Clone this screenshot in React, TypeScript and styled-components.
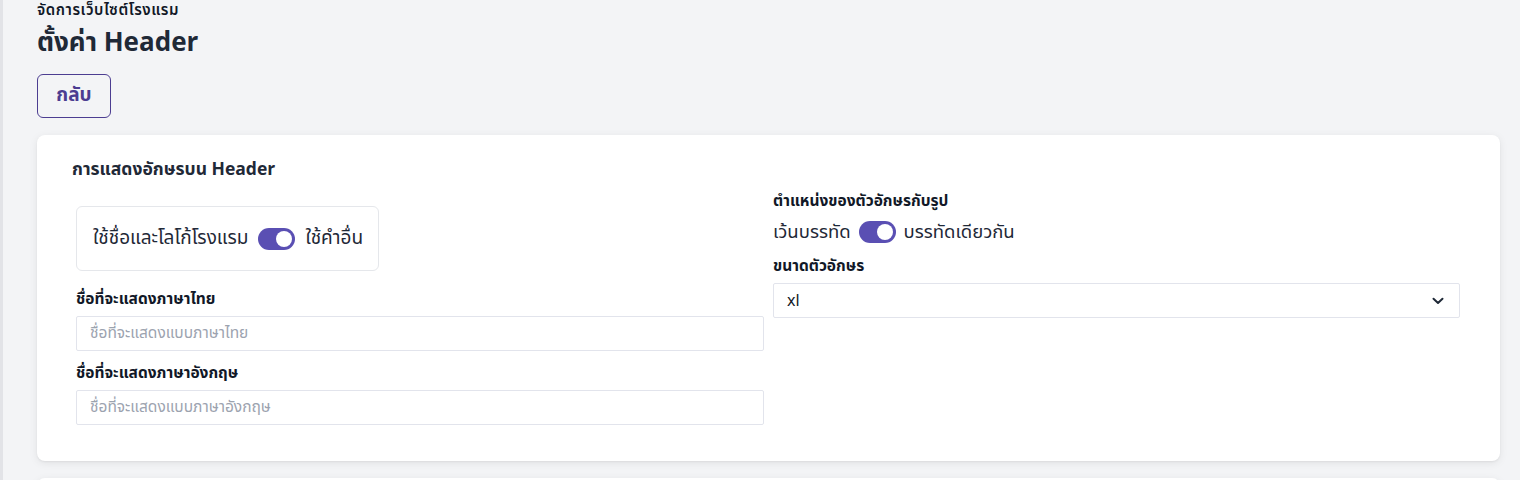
import React from "react";
import styled, { createGlobalStyle } from "styled-components";

const Global = createGlobalStyle`
  html, body { margin: 0; padding: 0; background: #f3f4f6; }
  body { font-family: "Noto Sans Thai", "Noto Sans", "Noto Sans CJK SC", sans-serif; color: #1f2937; }
  * { box-sizing: border-box; }
`;

const Page = styled.div`
  min-height: 480px;
  border-left: 3px solid #e2e3e7;
  padding: 2px 20px 0 34px;
`;

const Breadcrumb = styled.div`
  font-size: 15px;
  font-weight: 600;
  letter-spacing: 0.55px;
  line-height: 18px;
  color: #111827;
`;

const Title = styled.h1`
  margin: 6px 0 0;
  font-size: 26px;
  font-weight: 700;
  line-height: 34px;
  color: #1f2937;
`;

const BackButton = styled.button`
  margin-top: 14px;
  width: 74px;
  height: 44px;
  border: 1px solid #4c3d91;
  border-radius: 6px;
  background: transparent;
  color: #4c3d91;
  font-family: inherit;
  font-size: 19px;
  font-weight: 700;
  line-height: 24px;
  padding: 0;
  cursor: pointer;
`;

const Card = styled.section`
  margin-top: 17px;
  width: 1463px;
  height: 326px;
  background: #fff;
  border-radius: 8px;
  box-shadow: 0 2px 8px rgba(0, 0, 0, 0.08), 0 1px 2px rgba(0, 0, 0, 0.05);
  padding: 22px 40px 0 35px;
`;

const NextCard = styled.div`
  margin-top: 17px;
  width: 1463px;
  height: 20px;
  background: #fff;
  border-radius: 8px 8px 0 0;
  box-shadow: 0 2px 8px rgba(0, 0, 0, 0.08);
`;

const CardTitle = styled.h2`
  margin: 0;
  font-size: 17.5px;
  font-weight: 700;
  line-height: 25px;
  color: #1f2937;
`;

const Grid = styled.div`
  display: grid;
  grid-template-columns: 688px 687px;
  column-gap: 9px;
  padding-left: 4px;
`;

const Column = styled.div<{ $top: number }>`
  display: flex;
  flex-direction: column;
  align-items: stretch;
  padding-top: ${(p) => p.$top}px;
`;

const ToggleBox = styled.div`
  display: flex;
  align-items: center;
  gap: 10px;
  width: 303px;
  height: 65px;
  border: 1px solid #e5e7eb;
  border-radius: 6px;
  padding: 0 14px 0 16px;
  font-size: 19px;
  line-height: 24px;
`;

const ToggleRow = styled.div`
  display: flex;
  align-items: center;
  gap: 8px;
  font-size: 18.5px;
  line-height: 24px;
  margin-top: 8px;
`;

const Switch = styled.span`
  position: relative;
  display: inline-block;
  width: 37px;
  height: 22px;
  border-radius: 11px;
  background: #5a4fb3;
  flex-shrink: 0;
  &::after {
    content: "";
    position: absolute;
    top: 3px;
    right: 3px;
    width: 16px;
    height: 16px;
    border-radius: 50%;
    background: #fff;
  }
`;

const Label = styled.label<{ $mt: number }>`
  display: block;
  margin-top: ${(p) => p.$mt}px;
  font-size: 15.5px;
  font-weight: 700;
  line-height: 20px;
  color: #111827;
`;

const Input = styled.input`
  margin-top: 6px;
  width: 100%;
  height: 35px;
  border: 1px solid #e2e4ec;
  border-radius: 2px;
  padding: 0 13px;
  font-family: inherit;
  font-size: 15.5px;
  color: #111827;
  background: #fff;
  outline: none;
  &::placeholder { color: #9ca3af; }
`;

const SelectBox = styled.div`
  margin-top: 6px;
  width: 100%;
  height: 35px;
  border: 1px solid #e2e4ec;
  border-radius: 2px;
  padding: 0 15px 0 13px;
  display: flex;
  align-items: center;
  justify-content: space-between;
  font-size: 16px;
  color: #111827;
`;

const Chevron = () => (
  <svg width="12" height="8" viewBox="0 0 12 8" fill="none">
    <path d="M1.5 1.8 L6 6 L10.5 1.8" stroke="#1f2937" strokeWidth="2" strokeLinecap="round" strokeLinejoin="round" />
  </svg>
);

export default function App() {
  return (
    <>
      <Global />
      <Page>
        <Breadcrumb>จัดการเว็บไซต์โรงแรม</Breadcrumb>
        <Title>ตั้งค่า Header</Title>
        <BackButton>กลับ</BackButton>
        <Card>
          <CardTitle>การแสดงอักษรบน Header</CardTitle>
          <Grid>
            <Column $top={24}>
              <ToggleBox>
                <span>ใช้ชื่อและโลโก้โรงแรม</span>
                <Switch />
                <span>ใช้คำอื่น</span>
              </ToggleBox>
              <Label $mt={19}>ชื่อที่จะแสดงภาษาไทย</Label>
              <Input placeholder="ชื่อที่จะแสดงแบบภาษาไทย" />
              <Label $mt={13}>ชื่อที่จะแสดงภาษาอังกฤษ</Label>
              <Input placeholder="ชื่อที่จะแสดงแบบภาษาอังกฤษ" />
            </Column>
            <Column $top={10}>
              <Label $mt={0}>ตำแหน่งของตัวอักษรกับรูป</Label>
              <ToggleRow>
                <span>เว้นบรรทัด</span>
                <Switch />
                <span>บรรทัดเดียวกัน</span>
              </ToggleRow>
              <Label $mt={13}>ขนาดตัวอักษร</Label>
              <SelectBox>
                <span>xl</span>
                <Chevron />
              </SelectBox>
            </Column>
          </Grid>
        </Card>
        <NextCard />
      </Page>
    </>
  );
}
